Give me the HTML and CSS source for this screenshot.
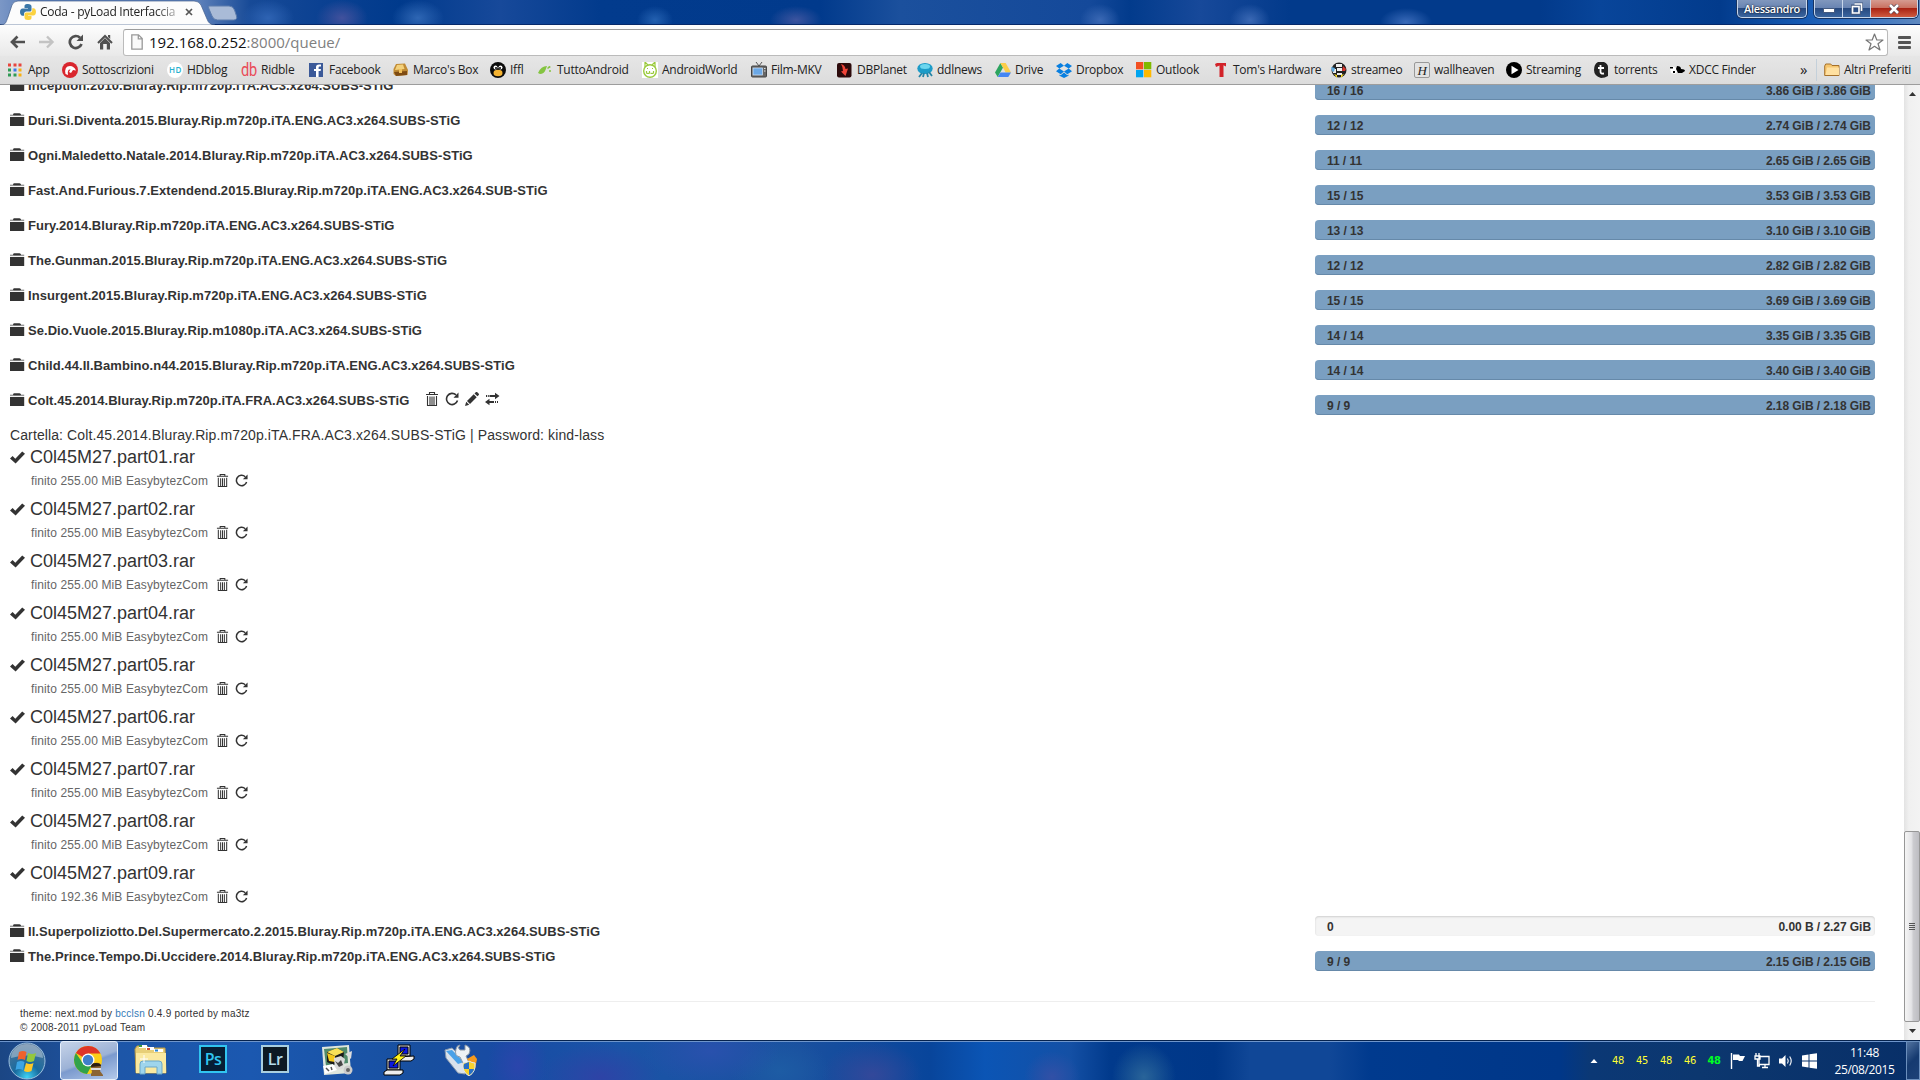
FILE: index.html
```
<!DOCTYPE html>
<html lang="it">
<head>
<meta charset="utf-8">
<title>Coda - pyLoad Interfaccia</title>
<link rel="stylesheet" href="styles.css">
</head>
<body>
<svg class="sprite" width="0" height="0">
  <symbol id="folder" viewBox="0 0 15 14"><path fill="#333" d="M3 1 4 .2h5.500L11 1v1H3z"/><path fill="#999" d="M0 1.600h14.200v1.500H0z"/><path fill="#333" d="M3.500 1h7v1.200h-7zM0 4h14.200v9H0z"/></symbol>
  <symbol id="trash" viewBox="0 0 14 16"><path fill="none" stroke="#333" stroke-width="1.100" d="M4.500 3V1.500h5V3M1 3.500h12M2.500 5v9.500h9V5M5 5.500v8.500M7 5.500v8.500M9 5.500v8.500"/></symbol>
  <symbol id="reload" viewBox="0 0 14 14"><path fill="none" stroke="#333" stroke-width="1.600" d="M11 2.900A5.600 5.600 0 1 0 12.500 8.600"/><path fill="#333" d="M13.500 .5v5.200H8.500z"/></symbol>
  <symbol id="pencil" viewBox="0 0 14 14"><path fill="#333" d="M0 14l1.200-4.200 3 3zM2 9l6.700-6.700 3 3L5 12zM9.500 1.500 11 0q.8-.3 1.300.2l1.500 1.500q.4.600 0 1.200l-1.400 1.400z"/></symbol>
  <symbol id="swap" viewBox="0 0 15 14"><path fill="#333" d="M4.500 3H10V.8L14.500 4 10 7.200V5H4.500zM1 3h1v2H1zM2.800 3h1v2h-1zM4.500 9H9v2H4.500v2.200L0 10l4.500-3.200zM10 9h1v2h-1zM12 9h1v2h-1z"/></symbol>
  <symbol id="check" viewBox="0 0 15 13"><path fill="#333" d="M0 7.500 2.600 5 5.300 7.700 12.200.4 15 2.700 5.600 12.600z"/></symbol>
</svg>

<header class="titlebar">
  <svg class="tab-shape" width="240" height="25" viewBox="0 0 240 25"><path d="M0 25C6 25 6 22 8 17L12 5Q13.500 1 18 1H194Q199 1 201 5L207 19Q209 25 215 25z" fill="#fcfcfc" stroke="#435e8c" stroke-width=".7"/><path d="M209 6h20q4 0 5.500 4l2 6q1 4-3 4h-16q-4 0-5.500-4l-3-7q-1-3 0-3z" fill="#a9bbd7" stroke="#5c7cac"/></svg>
  <div class="tab">
    <svg width="16" height="16" viewBox="0 0 16 16"><path fill="#3b77a8" d="M8 0C4.500 0 4.500 1.500 4.500 2.500V4H8v.6H2.700C1 4.600 0 6 0 8s1 3.700 2.500 3.700H4V9.500Q4.500 7.600 6.300 7.600h3.500Q11.500 7.500 11.500 6V2.500Q11.500 0 8 0z"/><path fill="#fbd240" d="M8 16c3.500 0 3.500-1.500 3.500-2.500V12H8v-.6h5.300C15 11.400 16 10 16 8s-1-3.700-2.500-3.700H12.200v2.200Q12 8.400 10 8.400H6.300Q4.500 8.500 4.500 10v3.500Q4.500 16 8 16z"/></svg>
    <span class="tab-title">Coda - pyLoad Interfaccia</span>
    <svg class="tab-close" width="8" height="8" viewBox="0 0 8 8"><path d="M1 1l6 6M7 1L1 7" stroke="#555" stroke-width="1.700"/></svg>
  </div>
  <div class="win-controls">
    <div class="user">Alessandro</div>
    <div class="buttons">
      <i class="btn"><svg width="12" height="16" viewBox="0 0 12 16"><rect x=".5" y="7.500" width="11" height="4" fill="#fff" stroke="#445a80"/></svg></i>
      <i class="btn"><svg width="14" height="14" viewBox="0 0 14 14"><path d="M4.500 2h7v7M2.500 4h7v7.500h-7z" fill="none" stroke="#445a80" stroke-width="3"/><path d="M4.500 2h7v7M2.500 4.500h6.500v6.500h-6.500z" fill="none" stroke="#fff" stroke-width="1.600"/></svg></i>
      <i class="btn close"><svg width="12" height="10" viewBox="0 0 12 10"><path d="M2 1l8 8M10 1L2 9" stroke="#53404e" stroke-width="4"/><path d="M2 1l8 8M10 1L2 9" stroke="#fff" stroke-width="2.600"/></svg></i>
    </div>
  </div>
</header>

<nav class="toolbar">
  <div class="nav-icons">
    <svg width="16" height="14" viewBox="0 0 16 14"><path d="M15 7H2M7.500 1.500 2 7l5.500 5.500" fill="none" stroke="#505050" stroke-width="2.700"/></svg>
    <svg width="16" height="14" viewBox="0 0 16 14"><path d="M0 7h13M8 1.500 13.500 7 8 12.500" fill="none" stroke="#c3c3c3" stroke-width="2.400"/></svg>
    <svg width="16" height="16" viewBox="0 0 16 16"><path d="M12 3.700A6 6 0 1 0 13.500 10" fill="none" stroke="#505050" stroke-width="2.700"/><path d="M15 .5V7H8.500z" fill="#505050"/></svg>
    <svg width="16" height="16" viewBox="0 0 16 16"><path d="M1 9 8 2l7 7" fill="none" stroke="#505050" stroke-width="2"/><path d="M3 9l5-5 5 5v6.500H9.800V10H6.200v5.500H3zM11 1h2.200v4L11 3z" fill="#505050"/></svg>
  </div>
  <div class="address">
    <svg width="12" height="16" viewBox="0 0 12 16"><path d="M.8.8h6.700l3.700 3.700v10.700H.8zM7.300.8v4h4" fill="#fafafa" stroke="#999" stroke-width="1.300"/></svg>
    <span class="url">192.168.0.252<em>:8000/queue/</em></span>
    <svg class="star" width="19" height="18" viewBox="0 0 19 18"><path d="M9.500 1 11.800 7h6.200l-5 3.800 2 6.200-5.500-3.700L4 17l2-6.200L1 7h6.200z" fill="#fff" stroke="#777" stroke-width="1.200" stroke-linejoin="round"/></svg>
  </div>
  <div class="menu"><i></i><i></i><i></i></div>
</nav>

<nav class="bookmarks">
  <a><svg class="ic" viewBox="0 0 16 16"><path fill="#e8453c" d="M0 1.500h3v3H0zM5.500 1.500h3v3h-3zM10.500 1.500h3v3h-3z"/><path fill="#2f9a54" d="M0 6.500h3v3H0zM0 11.500h3v3H0z"/><path fill="#3b78e7" d="M5.500 6.500h3v3h-3z"/><path fill="#f8b012" d="M10.500 6.500h3v3h-3zM10.500 11.500h3v3h-3z"/><path fill="#2f9a54" d="M5.500 11.500h3v3h-3z"/></svg>App</a>
  <a><svg class="ic" viewBox="0 0 16 16"><circle cx="8" cy="8" r="8" fill="#d9262e"/><path d="M3.500 12Q2 4 8 4q4 0 6 4.500l-3-.5-2 3-2-1 1.500-2.500Q5 7 6 13z" fill="#fff"/></svg>Sottoscrizioni</a>
  <a><svg class="ic" viewBox="0 0 16 16"><circle cx="8" cy="8" r="8" fill="#fff"/><text x="8" y="11" text-anchor="middle" font-size="8" fill="#25b1cf" font-family="Open Sans, sans-serif" font-weight="600" textLength="12">HD</text></svg>HDblog</a>
  <a><svg class="ic" viewBox="0 0 16 16"><text x="0" y="14" font-size="18" fill="#e94b58" font-family="Roboto, sans-serif" textLength="16" lengthAdjust="spacingAndGlyphs">db</text></svg>Ridble</a>
  <a><svg class="ic" viewBox="0 0 16 16"><rect x="0" y="1" width="14" height="14" fill="#3b5998"/><path fill="#fff" d="M7 15V9H5V7h2V5q0-2.600 3-2.600h2v2h-1.400q-1 0-1 1V7H12l-.4 2h-2v6z"/></svg>Facebook</a>
  <a><svg class="ic" viewBox="0 0 16 16"><path d="M3 2l9-.5L15 8l-.5 5L3 14 .5 12V7z" fill="#c08b35"/><path d="M4 3l6-.5L11.500 7 2 8z" fill="#f3d17c"/><path d="M1 10l13-1v4L3 14z" fill="#7e4b13"/><path d="M6 7h3v4H6z" fill="#f0c15c"/></svg>Marco's Box</a>
  <a><svg class="ic" viewBox="0 0 16 16"><circle cx="8" cy="8" r="8" fill="#0b0b0b"/><ellipse cx="8" cy="11" rx="4.500" ry="3.200" fill="#f5b331"/><circle cx="5.500" cy="5.500" r="2" fill="#fff"/><circle cx="10.500" cy="5.500" r="2" fill="#fff"/><circle cx="6" cy="6" r="1"/><circle cx="10" cy="6" r="1"/></svg>Iffl</a>
  <a><svg class="ic" viewBox="0 0 16 16"><path fill="#84c441" d="M1 11Q4 4 10 4l-1.500 4Q7 12 3 12zM10 6l2-1.500.8 1L11 7z"/><circle cx="12.500" cy="5" r="1" fill="#84c441"/><circle cx="13" cy="9" r="1" fill="#84c441"/></svg>TuttoAndroid</a>
  <a><svg class="ic" viewBox="0 0 16 16"><path fill="#fff" d="M0 0h16v16H0z"/><circle cx="8" cy="9" r="6.300" fill="none" stroke="#9aca3c" stroke-width="1.400"/><path d="M3 5V0l3 3M13 5V0l-3 3M4.500 9v2q1.500 1 3 0V9m1 2q1.500 1 3 0V9M5 6.500h1m4 0h1" fill="none" stroke="#9aca3c" stroke-width="1.200"/></svg>AndroidWorld</a>
  <a><svg class="ic" viewBox="0 0 16 16"><path d="M5 0l3 4 3-4" fill="none" stroke="#555"/><rect x=".5" y="4" width="15" height="11" rx="1" fill="#666" stroke="#444"/><rect x="2" y="6" width="9.500" height="7" fill="#6ba8e6" stroke="#d6e6f6" stroke-width=".7"/><path d="M13 6.500h1.500M13 9h1.500" stroke="#ddd"/></svg>Film-MKV</a>
  <a><svg class="ic" viewBox="0 0 16 16"><rect x="0" y="1" width="14.500" height="14.500" rx="2" fill="#2c0a0b"/><path d="M4 2q4 1 4.500 5L11 6.500 8.500 14 4 9.500l2-.5Q6 5 4 2z" fill="#f04438"/></svg>DBPlanet</a>
  <a><svg class="ic" viewBox="0 0 16 16"><ellipse cx="8" cy="6.500" rx="7.700" ry="5.500" fill="#1d9cc8"/><ellipse cx="8" cy="4.500" rx="5" ry="2.500" fill="#6cd6ee"/><path d="M5 11l-3 4M7 11l-1 4M10 11l1 4M12 10l3 4" stroke="#2684a5" stroke-width="1.800"/></svg>ddlnews</a>
  <a><svg class="ic" viewBox="0 0 16 16"><path fill="#2ca45f" d="M5.400 1 8 5.600 2.700 15 0 10.400z"/><path fill="#fccd48" d="M5.400 1h5.300L16 10.400h-5.300z"/><path fill="#4586f3" d="M5.500 10.400H16L13.300 15H2.800z"/></svg>Drive</a>
  <a><svg class="ic" viewBox="0 0 16 16"><path fill="#087fe0" d="M4.700 1 8 3.700 3.300 6.600 0 4zM11.300 1 16 4l-3.300 2.600L8 3.700zM0 9.300l3.300-2.700L8 9.500l-3.300 2.800zM16 9.300l-3.300-2.700L8 9.500l3.300 2.800zM3.500 12.500l1.200.8L8 10.500l3.300 2.800 1.200-.8v1.200L8 16l-4.500-2.300z"/></svg>Dropbox</a>
  <a><svg class="ic" viewBox="0 0 16 16"><path fill="#f25022" d="M0 0h7.300v7.300H0z"/><path fill="#7fba00" d="M8 0h7.300v7.300H8z"/><path fill="#00a4ef" d="M0 8h7.300v7.300H0z"/><path fill="#ffb900" d="M8 8h7.300v7.300H8z"/></svg>Outlook</a>
  <a class="tight"><svg class="ic" viewBox="0 0 16 16"><path fill="#d2232a" d="M0 2l2-1h9v3.500L8.500 3.300V15H4.500V3.500L1 5z"/></svg>Tom's Hardware</a>
  <a><svg class="ic" viewBox="0 0 16 16"><circle cx="8" cy="8" r="7.500" fill="#222"/><path d="M5 2h6v3H5zM1 7h4v4H2zM6 6h5v3H6zM6 11h5v2H6z" fill="#eee"/><path d="M0 5l4 1-1 4-2-1z" fill="#5ba8dd"/><path d="M12 4l3 3-1 2h-3z" fill="#d9352e"/><path d="M3 12l3 1v3zM10 13l3-1-3 4z" fill="#f8d91a"/></svg>streameo</a>
  <a><svg class="ic" viewBox="0 0 16 16"><rect x=".5" y=".5" width="15" height="15" rx="1.500" fill="#e3e3e3" stroke="#999"/><text x="8" y="12.500" text-anchor="middle" font-family="Liberation Serif, serif" font-style="italic" font-size="13" fill="#222">H</text></svg>wallheaven</a>
  <a><svg class="ic" viewBox="0 0 16 16"><circle cx="8" cy="8" r="8"/><path d="M5.500 3.800 12.500 8l-7 4.200z" fill="#fff"/></svg>Streaming</a>
  <a><svg class="ic" viewBox="0 0 16 16"><path d="M4 0h6q4 2 4 5v9q-3 2-7 2Q0 14 0 8 0 2 4 0z" fill="#222"/><path d="M6.500 3v7q0 2 3.500 1.500M4 6h6" fill="none" stroke="#fff" stroke-width="1.800"/></svg>torrents</a>
  <a><svg class="ic" viewBox="0 0 16 16"><path d="M1 6q3-3 6 0l2 3-3 3-4-1z" fill="#fff"/><path d="M1 5h3v1.500H1zM8 4q4 0 4 3 4 0 4 2l-3 2H9L7 7zM4 9h2v2H4z"/></svg>XDCC Finder</a>
  <span class="more">»</span>
  <a class="other"><svg class="ic" viewBox="0 0 16 16"><path d="M.7 4l1-2h5l1.300 1.500h7v10H.7z" fill="#f6c66f" stroke="#a5702a"/><path d="M1.500 13 3 5.500h12v7.500z" fill="#ffe0a0"/></svg>Altri Preferiti</a>
</nav>

<div class="viewport">
  <main class="page">
    <ul class="queue">
      <li class="pack"><span class="name"><svg class="fi"><use href="#folder"/></svg>Inception.2010.Bluray.Rip.m720p.iTA.AC3.x264.SUBS-STiG</span><div class="bar"><b>16 / 16</b><b>3.86 GiB / 3.86 GiB</b></div></li>
      <li class="pack"><span class="name"><svg class="fi"><use href="#folder"/></svg>Duri.Si.Diventa.2015.Bluray.Rip.m720p.iTA.ENG.AC3.x264.SUBS-STiG</span><div class="bar"><b>12 / 12</b><b>2.74 GiB / 2.74 GiB</b></div></li>
      <li class="pack"><span class="name"><svg class="fi"><use href="#folder"/></svg>Ogni.Maledetto.Natale.2014.Bluray.Rip.m720p.iTA.AC3.x264.SUBS-STiG</span><div class="bar"><b>11 / 11</b><b>2.65 GiB / 2.65 GiB</b></div></li>
      <li class="pack"><span class="name"><svg class="fi"><use href="#folder"/></svg>Fast.And.Furious.7.Extendend.2015.Bluray.Rip.m720p.iTA.ENG.AC3.x264.SUB-STiG</span><div class="bar"><b>15 / 15</b><b>3.53 GiB / 3.53 GiB</b></div></li>
      <li class="pack"><span class="name"><svg class="fi"><use href="#folder"/></svg>Fury.2014.Bluray.Rip.m720p.iTA.ENG.AC3.x264.SUBS-STiG</span><div class="bar"><b>13 / 13</b><b>3.10 GiB / 3.10 GiB</b></div></li>
      <li class="pack"><span class="name"><svg class="fi"><use href="#folder"/></svg>The.Gunman.2015.Bluray.Rip.m720p.iTA.ENG.AC3.x264.SUBS-STiG</span><div class="bar"><b>12 / 12</b><b>2.82 GiB / 2.82 GiB</b></div></li>
      <li class="pack"><span class="name"><svg class="fi"><use href="#folder"/></svg>Insurgent.2015.Bluray.Rip.m720p.iTA.ENG.AC3.x264.SUBS-STiG</span><div class="bar"><b>15 / 15</b><b>3.69 GiB / 3.69 GiB</b></div></li>
      <li class="pack"><span class="name"><svg class="fi"><use href="#folder"/></svg>Se.Dio.Vuole.2015.Bluray.Rip.m1080p.iTA.AC3.x264.SUBS-STiG</span><div class="bar"><b>14 / 14</b><b>3.35 GiB / 3.35 GiB</b></div></li>
      <li class="pack"><span class="name"><svg class="fi"><use href="#folder"/></svg>Child.44.Il.Bambino.n44.2015.Bluray.Rip.m720p.iTA.ENG.AC3.x264.SUBS-STiG</span><div class="bar"><b>14 / 14</b><b>3.40 GiB / 3.40 GiB</b></div></li>
      <li class="pack"><span class="name"><svg class="fi"><use href="#folder"/></svg>Colt.45.2014.Bluray.Rip.m720p.iTA.FRA.AC3.x264.SUBS-STiG<span class="actions"><svg width="14" height="16"><use href="#trash"/></svg><svg width="14" height="14"><use href="#reload"/></svg><svg width="14" height="14"><use href="#pencil"/></svg><svg width="15" height="14"><use href="#swap"/></svg></span></span><div class="bar"><b>9 / 9</b><b>2.18 GiB / 2.18 GiB</b></div></li>
    </ul>
    <section class="details">
      <p class="info">Cartella: Colt.45.2014.Bluray.Rip.m720p.iTA.FRA.AC3.x264.SUBS-STiG | Password: kind-lass</p>
      <div class="file"><h4><svg class="ck"><use href="#check"/></svg>C0l45M27.part01.rar</h4><p>finito 255.00 MiB EasybytezCom<svg class="t"><use href="#trash"/></svg><svg class="r"><use href="#reload"/></svg></p></div>
      <div class="file"><h4><svg class="ck"><use href="#check"/></svg>C0l45M27.part02.rar</h4><p>finito 255.00 MiB EasybytezCom<svg class="t"><use href="#trash"/></svg><svg class="r"><use href="#reload"/></svg></p></div>
      <div class="file"><h4><svg class="ck"><use href="#check"/></svg>C0l45M27.part03.rar</h4><p>finito 255.00 MiB EasybytezCom<svg class="t"><use href="#trash"/></svg><svg class="r"><use href="#reload"/></svg></p></div>
      <div class="file"><h4><svg class="ck"><use href="#check"/></svg>C0l45M27.part04.rar</h4><p>finito 255.00 MiB EasybytezCom<svg class="t"><use href="#trash"/></svg><svg class="r"><use href="#reload"/></svg></p></div>
      <div class="file"><h4><svg class="ck"><use href="#check"/></svg>C0l45M27.part05.rar</h4><p>finito 255.00 MiB EasybytezCom<svg class="t"><use href="#trash"/></svg><svg class="r"><use href="#reload"/></svg></p></div>
      <div class="file"><h4><svg class="ck"><use href="#check"/></svg>C0l45M27.part06.rar</h4><p>finito 255.00 MiB EasybytezCom<svg class="t"><use href="#trash"/></svg><svg class="r"><use href="#reload"/></svg></p></div>
      <div class="file"><h4><svg class="ck"><use href="#check"/></svg>C0l45M27.part07.rar</h4><p>finito 255.00 MiB EasybytezCom<svg class="t"><use href="#trash"/></svg><svg class="r"><use href="#reload"/></svg></p></div>
      <div class="file"><h4><svg class="ck"><use href="#check"/></svg>C0l45M27.part08.rar</h4><p>finito 255.00 MiB EasybytezCom<svg class="t"><use href="#trash"/></svg><svg class="r"><use href="#reload"/></svg></p></div>
      <div class="file"><h4><svg class="ck"><use href="#check"/></svg>C0l45M27.part09.rar</h4><p>finito 192.36 MiB EasybytezCom<svg class="t"><use href="#trash"/></svg><svg class="r"><use href="#reload"/></svg></p></div>
    </section>
    <ul class="queue">
      <li class="pack lowered"><span class="name"><svg class="fi"><use href="#folder"/></svg>Il.Superpoliziotto.Del.Supermercato.2.2015.Bluray.Rip.m720p.iTA.ENG.AC3.x264.SUBS-STiG</span><div class="bar empty"><b>0</b><b>0.00 B / 2.27 GiB</b></div></li>
      <li class="pack"><span class="name"><svg class="fi"><use href="#folder"/></svg>The.Prince.Tempo.Di.Uccidere.2014.Bluray.Rip.m720p.iTA.ENG.AC3.x264.SUBS-STiG</span><div class="bar"><b>9 / 9</b><b>2.15 GiB / 2.15 GiB</b></div></li>
    </ul>
    <footer>theme: next.mod by <a>bcclsn</a> 0.4.9 ported by ma3tz<br>© 2008-2011 pyLoad Team</footer>
  </main>
  <aside class="scroll">
    <svg width="16" height="18" viewBox="0 0 16 18"><path d="M5 11l3.500-4 3.500 4z" fill="#333"/></svg>
    <div class="thumb"><i></i><i></i><i></i><i></i></div>
    <svg width="16" height="18" viewBox="0 0 16 18"><path d="M5 7h7l-3.500 4z" fill="#333"/></svg>
  </aside>
</div>

<footer class="taskbar">
  <div class="apps">
    <span class="cell"><svg width="40" height="38" viewBox="0 0 40 38"><defs><radialGradient id="orb" cx=".5" cy=".95" r=".9"><stop offset="0" stop-color="#3fd3f5"/><stop offset=".4" stop-color="#186b9f"/><stop offset="1" stop-color="#4f7398"/></radialGradient></defs><circle cx="20" cy="19" r="18" fill="url(#orb)" stroke="#9dc0de"/><path d="M4 16a16 14 0 0 1 32 0q-16-5-32 0z" fill="#fff" opacity=".35"/><path d="M12 10q4-2 7.500 0L18 18q-4-2-7.500 0z" fill="#f0622d"/><path d="M21 11q4 2 8 0l-2 8q-4 2-7.500 0z" fill="#93c83e"/><path d="M10 20q4-2 7.500 0L16 28q-4-2-7.500 0z" fill="#3ba4e4"/><path d="M19 21q4 2 7.500 0l-2 8q-4 2-7.500 0z" fill="#fcc828"/></svg></span>
    <span class="cell active"><svg width="32" height="32" viewBox="0 0 32 32"><circle cx="15" cy="15" r="14" fill="#fbcf18"/><path d="M15 15 2.900 8A14 14 0 0 1 27.500 8.500H15z" fill="#de3527"/><path d="M2.900 8A14 14 0 0 0 14 29l6-11-11-1z" fill="#31a24a"/><circle cx="15" cy="15" r="6.500" fill="#fff"/><circle cx="15" cy="15" r="5.200" fill="#3f7fca"/><path d="M18 23q0-5 4-5 6-1 6 4l-1 4 3 4v1H18v-2l1-2z" fill="#8a6434"/><path d="M18 22q0-4 5-4t5 3z" fill="#2a1d10"/><path d="M18 23h10v2H18z" fill="#ddd"/></svg></span>
    <span class="cell"><svg width="34" height="32" viewBox="0 0 34 32"><path d="M1 5l2-3h10l2 2h16l1 25H2z" fill="#e7cf78" stroke="#b89a49"/><path d="M5 1h8v3H5z" fill="#fff"/><path d="M5 1h3v2H5z" fill="#3b9b3b"/><path d="M12 3h8v3h-8z" fill="#fff"/><path d="M13 4h3v2h-3z" fill="#d24b31"/><path d="M20 5h9v3h-9z" fill="#fff"/><path d="M21 5.500h3v2h-3z" fill="#2a86d1"/><path d="M2 9h30v20H2z" fill="#fae9a0"/><path d="M6 30V20q0-3 3-3h16q3 0 3 3v10h-5v-7H11v7z" fill="#9fd5ec" stroke="#6ba7c9"/><path d="M10 11v8M6 15h8" stroke="#fff"/></svg></span>
    <span class="cell"><i class="adobe ps">Ps</i></span>
    <span class="cell"><i class="adobe lr">Lr</i></span>
    <span class="cell"><svg width="32" height="32" viewBox="0 0 32 32"><path d="M1 3 28 1l2 28-27 2z" fill="#dfe6dd"/><path d="M3 5l23-2 1 16-22 3z" fill="#4f8a6b"/><path d="M6 8l10-4 7 4-1 10-10 3-6-3z" fill="#191919"/><path d="M6 8l10-4 7 4-9 4z" fill="#f7e058"/><path d="M6 9l8 3v6l-6-1z" fill="#f3c81c"/><path d="M13 14l7-2 4 3-2 10-8 1z" fill="#dadada"/><path d="M14 17l3 2 3-3 2 5-4 2z" fill="#444"/><path d="M2 22l10-2 4 6-12 4z" fill="#fff"/><path d="M24 10l7-3-1 8z" fill="#ddd"/><circle cx="27" cy="26" r="4.500" fill="#ccc"/><circle cx="27" cy="26" r="2" fill="#666"/><path d="M5 24l3 3M10 23l1 3" stroke="#555" stroke-width="1.500"/></svg></span>
    <span class="cell"><svg width="32" height="32" viewBox="0 0 32 32"><g stroke="#000"><path d="M15 1h12v11H15z" fill="#d8d8d8"/><path d="M17 3h8v7h-8z" fill="#0b19e0"/><path d="M14 13l17-1v3l-3 2H14z" fill="#eee"/><path d="M4 15h13v11H4z" fill="#d8d8d8"/><path d="M6 17h9v7H6z" fill="#0b19e0"/><path d="M1 28l3-2h16v3l-3 2H1z" fill="#eee"/><path d="M22 5 9 15h5l-4 7 13-10h-6z" fill="#fff21b" stroke-width=".8"/></g></svg></span>
    <span class="cell"><svg width="34" height="32" viewBox="0 0 34 32"><path d="M1 6l7-2 15 14-2 12-7-1L2 14z" fill="#d9e2ec" stroke="#8799ad"/><path d="M2 7l6-1 12 12-6 2z" fill="#49a1e8"/><path d="M16 1q-3 3 0 5h5V1q7 2 4 9l-3 2 5 11-5 2-6-12q-6-1-4-8 1-4 4-4z" fill="#eef2f6" stroke="#8b98a6"/><path d="M23 15l7-4 3 4-2 10z" fill="#f59a1d"/><path d="M19 19q4 0 6-2 3 2 6 2 1 9-6 13-7-4-6-13z" fill="#f8d22d" stroke="#dfe8f2"/><path d="M25 18v7h-5q-1-3 0-5zM25 25h5q-1 4-5 6z" fill="#2870c7"/></svg></span>
  </div>
  <div class="tray">
    <svg width="10" height="6" viewBox="0 0 10 6"><path d="M1.500 5 5 1l3.500 4z" fill="#fff"/></svg>
    <span>48</span><span>45</span><span>48</span><span>46</span><span class="green">48</span>
    <svg width="16" height="16" viewBox="0 0 16 16"><path d="M1.500 0v16" stroke="#fff" stroke-width="1.400"/><path d="M3 1.500h6l1 1.500h5l-2.500 5H9L8 7H3z" fill="#fff"/></svg>
    <svg width="16" height="16" viewBox="0 0 16 16"><path d="M5 3.500h10v8H5zM8 14.500h6M11 12v2M2 0v3M5 0v3M1 3h5v3H1zM3.500 6v7H6" fill="none" stroke="#fff" stroke-width="1.300"/></svg>
    <svg width="16" height="16" viewBox="0 0 16 16"><path d="M1 5.500h3L7.500 2v12L4 10.500H1z" fill="#fff"/><path d="M9.500 5.500q1.500 2.500 0 5M11.700 3.500q3 4.500 0 9" fill="none" stroke="#fff" stroke-width="1.100"/></svg>
    <svg width="16" height="16" viewBox="0 0 16 16"><path d="M0 2.500 6.500 1.500v6H0zM7.500 1.300 15 .3v7.200H7.500zM0 8.500h6.500v6L0 13.500zM7.500 8.500H15v7.200l-7.500-1z" fill="#fff"/></svg>
  </div>
  <div class="clock">11:48<br>25/08/2015</div>
  <div class="peek"></div>
</footer>
</body>
</html>
```
FILE: styles.css
```
* { box-sizing: border-box; }
body {
  margin: 0;
  width: 1920px;
  height: 1080px;
  overflow: hidden;
  display: flex;
  flex-direction: column;
  background: #fff;
  color: #333;
  font-family: "Liberation Sans", Arial, sans-serif;
}
svg { flex: none; }
ul, p, h4 { margin: 0; padding: 0; list-style: none; font-weight: normal; }
i, em { font-style: normal; }
.sprite { position: absolute; }

/* window frame */
.titlebar {
  flex: none;
  height: 25px;
  display: flex;
  justify-content: space-between;
  position: relative;
  border-bottom: 1px solid #06296a;
  background:
    radial-gradient(ellipse 26px 18px at 268px 18px, #2e63b3, transparent),
    radial-gradient(ellipse 26px 18px at 342px 18px, #41519d, transparent),
    radial-gradient(ellipse 26px 18px at 418px 18px, #2e66b4, transparent),
    radial-gradient(ellipse 26px 14px at 796px 20px, #3c549f, transparent),
    radial-gradient(ellipse 18px 14px at 655px 20px, #2360b0, transparent),
    radial-gradient(ellipse 20px 16px at 1100px 20px, #3a68b4, transparent),
    radial-gradient(ellipse 20px 16px at 1250px 20px, #3a68b4, transparent),
    radial-gradient(ellipse 26px 14px at 1406px 22px, #3869b8, transparent),
    linear-gradient(90deg, #7b97c6 0, #5b7fb9 30px, #5b7fb9 200px, #174a97 250px, #0b4192 320px, #003a8c 400px, #17499a 500px, #023b8d 600px, #013a8c 820px, #1b509d 900px, #14499a 1090px, #023b8c 1130px, #17499a 1200px, #023a8b 1290px, #023a8b 1540px, #08459a 1600px, #023b8c 1720px, #1459b3 1800px, #3b75c0 1870px, #5e88bf 1920px);
}
.tab-shape { position: absolute; left: 0; top: 0; }
.tab {
  position: relative;
  display: flex;
  align-items: center;
  width: 200px;
  padding-left: 20px;
  font: 12px/24px "Open Sans", "Noto Sans", sans-serif;
  color: #222;
}
.tab-title {
  width: 137px;
  margin-left: 4px;
  white-space: nowrap;
  letter-spacing: -.25px;
  -webkit-mask-image: linear-gradient(90deg, #000 115px, rgba(0,0,0,.3));
}
.tab-close { margin-left: 8px; }
.win-controls { display: flex; gap: 7px; padding-right: 2px; }
.user, .buttons {
  height: 18px;
  border: 1px solid #c7d6ea;
  border-top: 0;
  border-radius: 0 0 5px 5px;
  box-shadow: 0 0 0 1px #163363;
  background: linear-gradient(#8097bd 0, #6783b2 50%, #27497f 50%, #3a659f 100%);
}
.user {
  width: 70px;
  color: #fff;
  text-align: center;
  font: 600 11px/17px "Open Sans", sans-serif;
  text-shadow: 0 0 2px #000;
  letter-spacing: -.3px;
}
.buttons { display: flex; width: 104px; overflow: hidden; }
.btn { flex: none; width: 28px; display: flex; align-items: center; justify-content: center; border-right: 1px solid #c7d6ea; }
.btn.close { width: 46px; border: 0; background: linear-gradient(#d59b90 0, #c9705f 48%, #a92313 50%, #cf5b40 100%); }

/* navigation toolbar */
.toolbar {
  flex: none;
  height: 31px;
  display: flex;
  align-items: center;
  padding: 3px 9px 0 10px;
  background: linear-gradient(#fdfdfd, #e9e9e9);
}
.nav-icons { display: flex; align-items: center; gap: 13px; width: 113px; }
.address {
  width: 1765px;
  height: 27px;
  display: flex;
  align-items: center;
  padding: 0 3px 0 7px;
  background: #fff;
  border: 1px solid #bbb;
  border-top-color: #9c9c9c;
  border-radius: 3px;
}
.url { margin-left: 6px; font: 15px/24px "Open Sans", "Noto Sans", sans-serif; color: #111; flex: 1; }
.url em { color: #808080; }
.menu { margin-left: 10px; width: 13px; display: grid; gap: 2px; }
.menu i { height: 3px; border-radius: 1px; background: #555; }

/* bookmarks */
.bookmarks {
  flex: none;
  height: 29px;
  border-bottom: 1px solid #9d9d9d;
  background: linear-gradient(#e6e6e6, #dcdcdc);
  display: grid;
  grid-template-columns: 54px 105px 74px 68px 84px 97px 47px 105px 109px 86px 80px 78px 61px 80px 79px 116px 83px 92px 88px 75px 131px 16px 1fr;
  align-items: center;
  padding-left: 8px;
  font: 12px/28px "Open Sans", "Noto Sans", sans-serif;
  letter-spacing: -.25px;
  color: #222;
  white-space: nowrap;
}
.bookmarks a { display: flex; align-items: center; gap: 4px; }
.bookmarks a.tight { gap: 2px; }
.ic { width: 16px; height: 16px; }
.more { font-size: 15px; line-height: 22px; margin-top: -2px; }
.other { border-left: 1px solid #c4d0da; padding-left: 7px; height: 22px; }

/* page viewport */
.viewport { flex: none; height: 955px; display: flex; overflow: hidden; }
.page { width: 1904px; margin-top: -10px; padding: 0 29px 0 10px; }
.pack { height: 35px; display: flex; justify-content: space-between; align-items: flex-start; }
.name {
  display: flex;
  align-items: center;
  height: 20px;
  font-weight: bold;
  font-size: 13px;
  letter-spacing: .05px;
}
.lowered .name { margin-top: 10px; }
.fi { width: 15px; height: 14px; margin-right: 3px; }
.actions { display: flex; align-items: center; gap: 6px; margin: -2px 0 0 16px; }
.bar {
  width: 560px;
  height: 20px;
  margin-top: 5px;
  padding: 1px 4px 0 12px;
  display: flex;
  justify-content: space-between;
  font-size: 12px;
  line-height: 20px;
  letter-spacing: -.05px;
  border-radius: 4px;
  background: #7a9fc1;
  box-shadow: inset 0 -1px #6689a9;
}
.bar.empty { background: #f4f4f4; box-shadow: inset 0 1px 2px rgba(0,0,0,.15); }
.info { font-size: 14px; line-height: 20px; height: 20px; letter-spacing: .11px; }
.details { height: 486px; }
.file { height: 52px; }
.file h4 { display: flex; align-items: center; font-size: 18px; line-height: 24px; }
.ck { width: 15px; height: 13px; margin-right: 5px; }
.file p { display: flex; align-items: center; padding-left: 21px; font-size: 12px; line-height: 24px; color: #666; letter-spacing: .12px; }
.t { width: 13px; height: 15px; margin: -2px 0 0 8px; }
.r { width: 13px; height: 13px; margin: -2px 0 0 6px; }
.page > footer {
  margin-top: 20px;
  border-top: 1px solid #eee;
  padding: 5px 10px;
  font-size: 10px;
  line-height: 14px;
  letter-spacing: .24px;
}
.page > footer a { color: #337ab7; }

/* scrollbar */
.scroll {
  width: 16px;
  display: flex;
  flex-direction: column;
  background: linear-gradient(90deg, #e3e3e3, #f0f0f0 30%, #f3f3f3);
}
.thumb {
  height: 191px;
  margin-top: auto;
  border: 1px solid #979797;
  border-radius: 2px;
  background: linear-gradient(90deg, #f5f5f5, #e4e4e7 45%, #cbcbcf 60%, #bdbdc2);
  display: flex;
  flex-direction: column;
  align-items: center;
  justify-content: center;
  gap: 1px;
}
.thumb i { width: 6px; height: 1px; background: #555; }

/* taskbar */
.taskbar {
  flex: none;
  height: 40px;
  border-top: 1px solid #06234e;
  box-shadow: inset 0 1px #6e95cb;
  display: flex;
  align-items: center;
  color: #fff;
  background:
    radial-gradient(ellipse 30px 40px at 518px 25px, #2b45ac, transparent),
    radial-gradient(ellipse 60px 34px at 600px 36px, #2e43a6, transparent),
    radial-gradient(ellipse 70px 34px at 710px 10px, #2951ad, transparent),
    radial-gradient(ellipse 50px 34px at 780px 30px, #1d5ca4, transparent),
    radial-gradient(ellipse 50px 34px at 872px 34px, #33489a, transparent),
    radial-gradient(ellipse 28px 26px at 1052px 36px, #3250a6, transparent),
    radial-gradient(ellipse 32px 34px at 1144px 36px, #296499, transparent),
    linear-gradient(90deg, #1b4684 0, #1d4e96 60px, #1d56a8 120px, #1b58b0 250px, #184f9f 430px, #184ba4 500px, #1a54a7 620px, #1a509f 800px, #08459b 930px, #0b55b5 985px, #1450a5 1070px, #013a8c 1110px, #003788 1215px, #104797 1250px, #104797 1330px, #003a8e 1370px, #003788 1560px, #0b3875 1590px, #0c376f 1700px, #082f68 1920px);
}
.apps { display: grid; grid-template-columns: 52px 65px 62px 62px 62px 62px 62px 62px; padding-left: 3px; height: 39px; }
.cell { display: flex; align-items: center; justify-content: center; padding-bottom: 2px; }
.apps .cell:first-child { width: 48px; padding: 0; }
.cell.active {
  width: 58px;
  margin-left: 5px;
  padding: 0;
  border: 1px solid #e4eefb;
  border-radius: 3px;
  background: linear-gradient(160deg, #c6d3e8, #9cb2d6 50%, #7b9ace 55%, #b3c9ea);
}
.adobe { width: 28px; height: 28px; margin-bottom: 2px; border: 2px solid #31c5f0; background: #071e34; color: #31c5f0; font: 600 16px/24px "Open Sans", sans-serif; text-align: center; letter-spacing: -.5px; }
.adobe.lr { border-color: #a9cfe0; background: #0d1a24; color: #b4dcea; }
.tray {
  margin-left: auto;
  display: grid;
  grid-template-columns: repeat(10, 24px);
  justify-items: center;
  align-items: center;
  font: 11px/16px "DejaVu Sans Condensed", "DejaVu Sans", sans-serif;
  letter-spacing: -.3px;
  color: #ff3;
}
.green { color: #0f2; font-weight: bold; }
.clock { width: 84px; padding-left: 1px; text-align: center; font: 12px/17px "Open Sans", "Noto Sans", sans-serif; letter-spacing: -.35px; }
.peek { width: 14px; height: 39px; border: 1px solid #6b8fbd; background: linear-gradient(135deg, #5273a0, #153a70 50%, #1d4278); }
```
